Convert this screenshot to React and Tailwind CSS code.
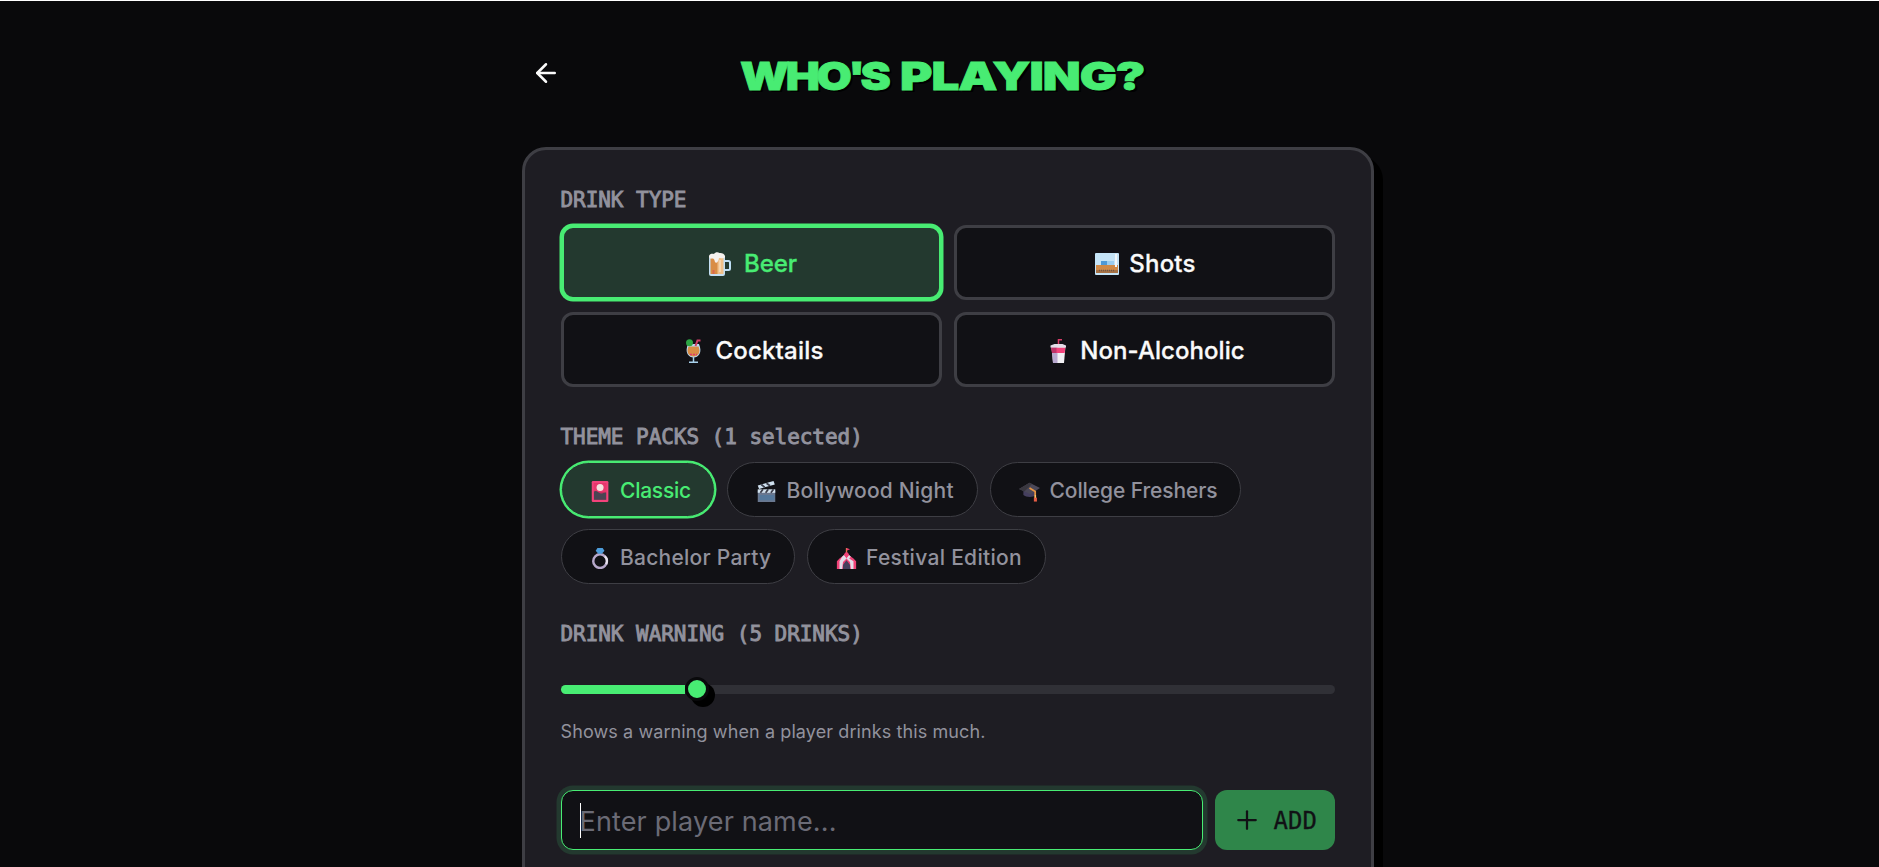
import { useState } from "react";
import { ArrowLeft, Plus } from "lucide-react";

const DRINKS = [
  { id: "beer", label: "Beer", icon: BeerIcon, text: "pl-[2px]" },
  { id: "shots", label: "Shots", icon: ShotIcon, text: "tracking-[0.2px]" },
  { id: "cocktails", label: "Cocktails", icon: CocktailIcon, text: "tracking-[0.2px]" },
  { id: "non-alcoholic", label: "Non-Alcoholic", icon: CupIcon, text: "tracking-[0.05px]" },
];

const PACKS = [
  { id: "classic", label: "Classic", icon: CardIcon, width: "w-[154.5px]", text: "tracking-[-0.25px]" },
  { id: "bollywood", label: "Bollywood Night", icon: ClapperIcon, width: "w-[251px]", text: "tracking-[0.2px]" },
  { id: "college", label: "College Freshers", icon: CapIcon, width: "w-[251px]", text: "tracking-[-0.1px]" },
  { id: "bachelor", label: "Bachelor Party", icon: RingIcon, width: "w-[234px]", text: "tracking-[0.25px]" },
  { id: "festival", label: "Festival Edition", icon: TentIcon, width: "w-[239.5px]", text: "tracking-[0.3px]" },
];

function BeerIcon({ className }) {
  return (
    <svg viewBox="0 0 24 24" className={className}>
      <path d="M16 9h4.500a1.500 1.500 0 0 1 1.500 1.500v6a1.500 1.500 0 0 1-1.500 1.500H16" fill="none" stroke="#bfdff5" strokeWidth="2" />
      <path d="M1 4h16v18a2 2 0 0 1-2 2H3a2 2 0 0 1-2-2z" fill="#c4dff3" />
      <path d="M2.500 6h7.500v16H2.500z" fill="#d98d45" />
      <path d="M9.500 6h6v16h-6z" fill="#f0c08a" />
      <path d="M12 8v12" stroke="#f8dcb8" strokeWidth="1.500" />
      <path d="M4.500 19h2M4.500 21h2" stroke="#d9405a" strokeWidth="1" />
      <path d="M1 4.500C1 2 4 1.500 6 2c1-2 4-2.500 5.500-1C14 .5 17.500 2 17 5.500c-2 1.500-4 0-6 .5-.5 4-3 6-4 4-.5-2-1-4-3-3.500C2 7 1 6 1 4.500z" fill="#f5f1ee" />
    </svg>
  );
}

function ShotIcon({ className }) {
  return (
    <svg viewBox="0 0 24 24" className={className}>
      <rect x="0" y="1" width="24" height="22" rx="1" fill="#c5e4f7" />
      <rect x="1" y="13" width="22" height="8" fill="#d08a48" />
      <rect x="1" y="18" width="22" height="3" fill="#a67245" />
      <path d="M4 18.500h16" stroke="#6f5747" strokeWidth="1.500" strokeDasharray="1 1" />
      <rect x="6" y="9" width="6" height="4" fill="#4f9ad8" />
      <rect x="12" y="9" width="7" height="4" fill="#9bcdf0" />
      <rect x="20" y="2" width="2" height="13" fill="#f3f8fb" />
    </svg>
  );
}

function CocktailIcon({ className }) {
  return (
    <svg viewBox="0 0 24 24" className={className}>
      <path d="M7 5h11c1.500 4 2 7 .5 10-1.500 2.500-3.500 3.500-6 3.500s-4.500-1-6-3.500C5 12 5.500 9 7 5z" fill="#b9d9f0" />
      <path d="M7.500 7.500h10c1 3 1.500 4.500.3 7-1 2-3 3-5.300 3s-4.300-1-5.300-3c-1.200-2.500-.7-4 .3-7z" fill="#d98d45" />
      <path d="M9 15.500h7" stroke="#e0396c" strokeWidth="1.500" strokeDasharray="2 1" />
      <path d="M12.500 18v5M8 23.200h9" stroke="#a9d2ec" strokeWidth="1.500" />
      <circle cx="8.500" cy="3.800" r="3.500" fill="#2da644" />
      <path d="M14.500 7 16.500 1.500H19.500" fill="none" stroke="#cf3f67" strokeWidth="2" />
    </svg>
  );
}

function CupIcon({ className }) {
  return (
    <svg viewBox="0 0 24 24" className={className}>
      <path d="M12.500 5V.8H16" fill="none" stroke="#d63c67" strokeWidth="1.500" />
      <path d="M5.500 7h14l-1.500 17H7z" fill="#f2f1f4" />
      <path d="M5.500 7H11.500v17H7z" fill="#b9a9cf" />
      <path d="M5.300 8.500h14L18.700 14H6z" fill="#f2437b" />
      <path d="M5.300 8.500H10.500V14H6z" fill="#bd3468" />
      <path d="M4.500 6.500 8.500 5h8l3.500 1.500v2h-15.500z" fill="#e4dee8" />
    </svg>
  );
}

function CardIcon({ className }) {
  return (
    <svg viewBox="0 0 24 24" className={className}>
      <rect x="2" y="0" width="19" height="24" rx="1.500" fill="#f2437b" />
      <rect x="4.500" y="2.500" width="14" height="19" fill="#c92f60" />
      <path d="M4.500 2.500h14v10h-14z" fill="#e8386d" />
      <path d="M4.500 12c3-2 5 1 7 2s4-1 7-1v8.500h-14z" fill="#4a4453" />
      <circle cx="11.500" cy="7.500" r="4" fill="#f4e3df" />
    </svg>
  );
}

function ClapperIcon({ className }) {
  return (
    <svg viewBox="0 0 24 24" className={className}>
      <rect x="2" y="11" width="20" height="13" fill="#6a7890" />
      <rect x="4" y="16" width="17" height="6" fill="#55789b" />
      <path d="M2 5 20 0l1.500 4L3.500 9z" fill="#cfe0ef" />
      <path d="M6 4l4 3M12 2.500l4 3" stroke="#3b3e4b" strokeWidth="2" />
      <path d="M2 9.500h20v4H2z" fill="#d3e2ee" />
      <path d="M5 13.500l3-4M11 13.500l3-4M17 13.500l3-4" stroke="#3b3e4b" strokeWidth="2" />
    </svg>
  );
}

function CapIcon({ className }) {
  return (
    <svg viewBox="0 0 24 24" className={className}>
      <path d="M5 11h14v5c-2 3-11 3-14 0z" fill="#453f5e" />
      <path d="M0 9 12 2l12 6-11 7z" fill="#4b4858" />
      <path d="M0 9 12 2l3 1.500L6 12z" fill="#39373f" />
      <path d="M12 8l6.500 4v8" fill="none" stroke="#e59442" strokeWidth="2" />
      <rect x="17" y="19" width="3.500" height="4.500" fill="#e65d45" />
      <path d="M18 16h1.500v3H18z" fill="#f5c86b" />
    </svg>
  );
}

function RingIcon({ className }) {
  return (
    <svg viewBox="0 0 24 24" className={className}>
      <circle cx="11.500" cy="15" r="7.800" fill="none" stroke="#b7a9cb" strokeWidth="2.800" />
      <path d="M17 9.500A7.800 7.800 0 0 1 18.500 18.500" fill="none" stroke="#e8e3ee" strokeWidth="2.500" />
      <path d="M8.500 0h6l2 3-3 3.500h-4L6.500 3z" fill="#4d9ddb" />
    </svg>
  );
}

function TentIcon({ className }) {
  return (
    <svg viewBox="0 0 24 24" className={className}>
      <path d="M12 7V0" stroke="#df8a3d" strokeWidth="1.500" />
      <path d="M12 0l4 1.500-4 1.500z" fill="#ef3c72" />
      <path d="M12 5c2 3 5 4.500 8 7l3 3v9H1v-9l3-3c3-2.500 6-4 8-7z" fill="#ef4277" />
      <path d="M7 10l2-2 3 3 3-3 2 2-2 2 5 3v9h-3l-1-8-4-4-4 4-1 8H4v-9z" fill="#e2dce8" />
      <path d="M9 7l3-3 3 3-3 5z" fill="#ef4277" />
      <path d="M12 14l4 5v5H8v-5z" fill="#463f5c" />
    </svg>
  );
}

function SectionLabel({ children }) {
  return (
    <div className="h-[27px] pt-[2px] font-['DejaVu_Sans_Mono',monospace] text-[21px] leading-[27px] tracking-[-0.05px] text-[#92929d] [-webkit-text-stroke:0.9px_#92929d]">
      {children}
    </div>
  );
}

function DrinkButton({ drink, active, onClick }) {
  const Icon = drink.icon;
  return (
    <button
      onClick={onClick}
      className={`flex h-[75px] items-center justify-center rounded-xl border-3 pt-[3px] pl-[3px] text-2xl font-medium [-webkit-text-stroke:0.3px_currentColor] ${
        active
          ? "border-[#48ec73] bg-[#23392f] text-[#48ec73] shadow-[0_0_0_1.5px_#48ec73]"
          : "border-[#3e3e44] bg-[#111115] text-[#fafafa]"
      }`}
    >
      <Icon className="mr-2.5 size-6" />
      <span className={drink.text}>{drink.label}</span>
    </button>
  );
}

function PackChip({ pack, active, onClick }) {
  const Icon = pack.icon;
  return (
    <button
      onClick={onClick}
      className={`flex h-[55px] items-center rounded-full border pt-[3px] pl-[28px] text-[21px] font-medium whitespace-nowrap ${pack.width} ${
        active
          ? "border-[#48ec73] bg-[#23392f] text-[#48ec73] shadow-[0_0_0_1.5px_#48ec73]"
          : "border-[#3e3e44] bg-[#111115] text-[#92929d]"
      }`}
    >
      <Icon className="mr-[9.5px] h-[21px] w-[21px]" />
      <span className={pack.text}>{pack.label}</span>
    </button>
  );
}

export default function App() {
  const [drink, setDrink] = useState("beer");
  const [packs, setPacks] = useState(["classic"]);
  const [limit] = useState(5);

  function togglePack(id) {
    setPacks(packs.includes(id) ? packs.filter((p) => p !== id) : [...packs, id]);
  }

  return (
    <div className="h-screen overflow-hidden border-t border-white bg-[#09090b] font-[Inter,sans-serif] text-[#fafafa]">
      <div className="ml-[521.5px] w-[852px]">
        <header className="flex h-[146px] items-start pt-[50px]">
          <button className="mt-[7px] ml-[9px]">
            <ArrowLeft size={30} strokeWidth={2} />
          </button>
          <h1 className="ml-[179px] origin-left scale-x-[1.28] text-[38.5px] leading-[50px] font-black whitespace-nowrap text-[#48ec73] [-webkit-text-stroke:0.8px_#48ec73] [text-shadow:2px_2px_0_#000]">
            <span className="mr-[-4px] inline-block origin-left scale-x-[0.925] tracking-[-3px]">
              WHO<span className="tracking-[-4px]">'</span>S
            </span>
            <span className="tracking-[-3px]"> </span>
            <span className="tracking-[-0.8px]">PLAYING?</span>
          </h1>
        </header>

        <main className="h-[900px] rounded-3xl border-3 border-[#3e3e44] bg-[#1e1d23] px-9 pt-[35px] shadow-[9px_9px_0_#000]">
          <SectionLabel>DRINK TYPE</SectionLabel>
          <div className="mt-[13px] grid grid-cols-2 gap-3">
            {DRINKS.map((d) => (
              <DrinkButton key={d.id} drink={d} active={d.id === drink} onClick={() => setDrink(d.id)} />
            ))}
          </div>

          <div className="mt-[35px]">
            <SectionLabel>THEME PACKS ({packs.length} selected)</SectionLabel>
          </div>
          <div className="mt-[13px] flex flex-wrap gap-3">
            {PACKS.map((p) => (
              <PackChip key={p.id} pack={p} active={packs.includes(p.id)} onClick={() => togglePack(p.id)} />
            ))}
          </div>

          <div className="mt-[35px]">
            <SectionLabel>DRINK WARNING ({limit} DRINKS)</SectionLabel>
          </div>
          <div className="mt-[31px] flex h-6 items-center">
            <div className="h-[9px] w-[124.5px] rounded-l-full bg-[#48ec73]" />
            <div className="z-10 size-6 shrink-0 rounded-full border-3 border-[#09090b] bg-[#48ec73] shadow-[6px_6px_0_#000]" />
            <div className="h-[9px] flex-1 rounded-r-full bg-[#303036]" />
          </div>
          <p className="mt-[17px] text-lg leading-[27px] tracking-[0.1px] text-[#92929d]">
            Shows a warning when a player drinks this much.
          </p>

          <div className="mt-[45px] flex gap-3">
            <div className="flex h-[60px] flex-1 items-center rounded-xl border border-[#48ec73] bg-[#111115] pl-[18px] shadow-[0_0_0_4.5px_#23392f]">
              <span className="h-[35px] w-px bg-white" />
              <span className="-ml-px pt-[4px] text-[27px] tracking-[0.15px] text-[#6b6b76]">Enter player name...</span>
            </div>
            <button className="flex h-[60px] w-[120px] items-center rounded-xl bg-[#2f864a] pl-[17px] font-['DejaVu_Sans_Mono',monospace] text-2xl text-[#111115]">
              <Plus size={30} strokeWidth={1.8} />
              <span className="ml-3 pt-[2px] [-webkit-text-stroke:0.3px_#111115]">ADD</span>
            </button>
          </div>
        </main>
      </div>
    </div>
  );
}
